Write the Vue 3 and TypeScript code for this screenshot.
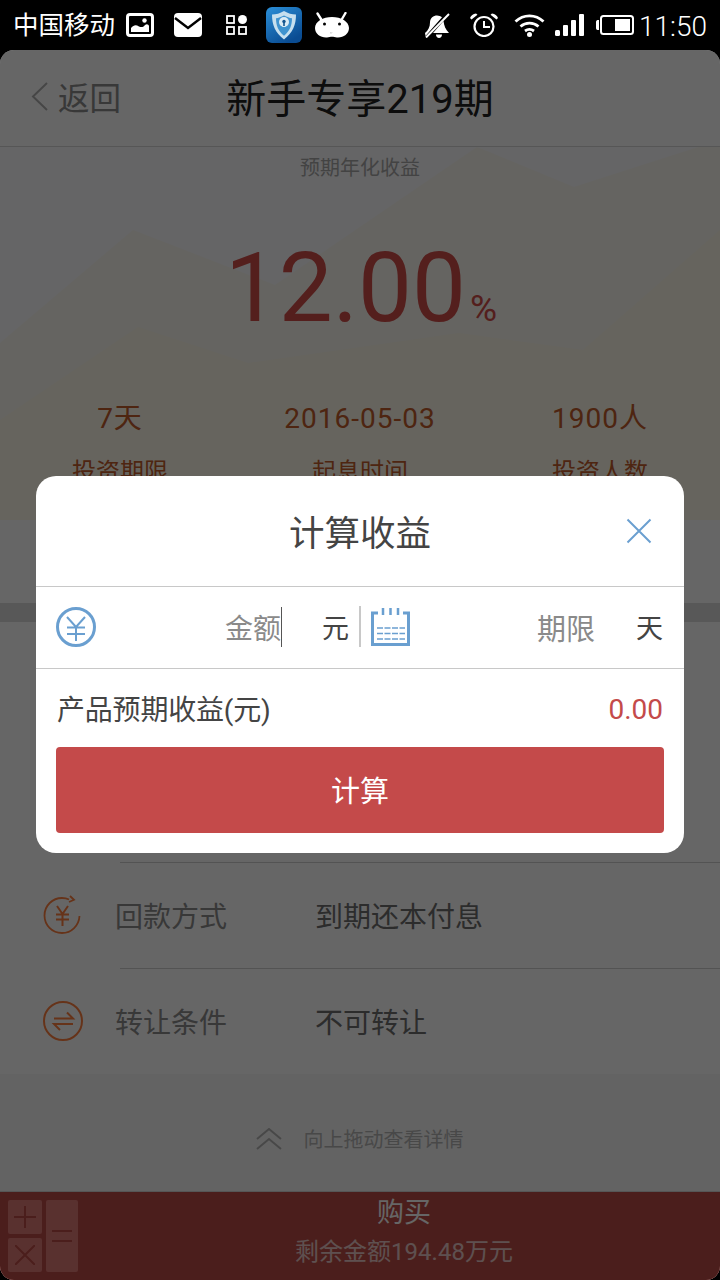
<script setup lang="ts">
const stats = [
  { value: "7天", label: "投资期限" },
  { value: "2016-05-03", label: "起息时间" },
  { value: "1900人", label: "投资人数" },
];
</script>

<template>
  <div class="screen">
    <div class="status">
      <div class="status-group">
        <span class="carrier">中国移动</span>
        <svg class="st-image" width="28" height="24" viewBox="0 0 28 24">
          <rect x="1.500" y="1.500" width="25" height="21" rx="2.500" fill="none" stroke="#fff" stroke-width="3" />
          <path d="M5 19v-4c3-3.500 5-3.500 8-1.500 3 1.500 5 0 6-1.500 2-1.500 3.500-.5 4 1v6z" fill="#fff" />
          <circle cx="18.500" cy="7.500" r="2.200" fill="#fff" />
        </svg>
        <svg class="st-mail" width="28" height="24" viewBox="0 0 28 24">
          <rect width="28" height="24" rx="4" fill="#fff" />
          <path d="M1 5l13 10L27 5" fill="none" stroke="#000" stroke-width="2.400" />
        </svg>
        <svg class="st-grid" width="21" height="20" viewBox="0 0 21 20">
          <g fill="none" stroke="#fff" stroke-width="1.800">
            <rect x="1" y="1" width="7" height="7" />
            <rect x="1" y="12" width="7" height="7" />
            <rect x="13" y="12" width="7" height="7" />
          </g>
          <circle cx="16.500" cy="4.500" r="4.500" fill="#fff" />
        </svg>
        <svg class="st-app" width="36" height="36" viewBox="0 0 36 36">
          <defs>
            <linearGradient id="appBg" x1="0" y1="0" x2="0.6" y2="1">
              <stop offset="0" stop-color="#2b8fd8" />
              <stop offset="1" stop-color="#0a4c92" />
            </linearGradient>
          </defs>
          <rect width="36" height="36" rx="6" fill="url(#appBg)" />
          <path d="M18 4c4 2.500 8 3.500 12 3.500 0 10-3 18-12 25C9 25.500 6 17.500 6 7.500 10 7.500 14 6.500 18 4z" fill="#c6dfee" />
          <path d="M18 8.500c3 1.700 5.500 2.400 8 2.700 0 7-2.200 13-8 17.500-5.800-4.500-8-10.500-8-17.500 2.500-.3 5-1 8-2.700z" fill="#3f93cf" />
          <circle cx="18" cy="15" r="5" fill="#dcecf5" />
          <path d="M16.800 14h2.400l.4 6h-3.200z" fill="#dcecf5" />
          <circle cx="18" cy="14.500" r="1.700" fill="#15568f" />
          <rect x="17.200" y="15" width="1.600" height="4" fill="#15568f" />
        </svg>
        <svg class="st-droid" width="34" height="26" viewBox="0 0 34 26">
          <path d="M6 7L2.500 1.500M27 7l3.500-6" stroke="#fff" stroke-width="2.400" stroke-linecap="round" />
          <path d="M17 5C8 5 0 9.500 0 16c0 6 6 10 12 9.500 2-.2 3.500-.8 5-.8s3 .6 5 .8c6 .5 12-3.500 12-9.500C34 9.500 26 5 17 5z" fill="#fff" />
          <circle cx="9.500" cy="12" r="1.500" fill="#000" />
          <circle cx="24.500" cy="12" r="1.500" fill="#000" />
          <path d="M15 20.500c1 .8 1.500.8 2 0" fill="none" stroke="#bbb" stroke-width="1" />
        </svg>
      </div>
      <div class="status-group">
        <svg class="st-bell" width="26" height="25" viewBox="0 0 26 25">
          <path d="M1 20c3-2.500 5-6 5-10.500C6 5 9.500 2.500 13 2.500c2 0 3.500.7 5 1.800L1.500 23z" fill="#fff" />
          <path d="M19.500 8c.5 4.500 2 8.500 5.500 12H9z" fill="#fff" />
          <path d="M12 21.500h6c0 2-1.300 3.500-3 3.500s-3-1.500-3-3.500z" fill="#fff" />
          <path d="M2 24.500L25 1" stroke="#fff" stroke-width="2" />
        </svg>
        <svg class="st-alarm" width="30" height="24" viewBox="0 0 30 24">
          <circle cx="15" cy="13.500" r="9.500" fill="none" stroke="#fff" stroke-width="2.200" />
          <path d="M15 8v6h6" fill="none" stroke="#fff" stroke-width="2" />
          <path d="M1 5c1-2.500 3-4 6-4.500l1.500 1.200L2.500 6.500zM29 5c-1-2.500-3-4-6-4.500l-1.500 1.200 6 4.800z" fill="#fff" />
        </svg>
        <svg class="st-wifi" width="31" height="24" viewBox="0 0 31 24">
          <g fill="none" stroke="#fff" stroke-width="2.800">
            <path d="M1.500 8.500c8-7.500 20-7.500 28 0" />
            <path d="M6.500 13.500c5.200-4.500 12.800-4.500 18 0" />
            <path d="M11 18c2.800-2 6.200-2 9 0" />
          </g>
          <circle cx="15.500" cy="21.500" r="2.500" fill="#fff" />
        </svg>
        <svg class="st-signal" width="29" height="22" viewBox="0 0 29 22">
          <g fill="#fff">
            <rect x="0" y="16" width="5" height="6" rx="1.500" />
            <rect x="8" y="11" width="5" height="11" rx="1" />
            <rect x="16" y="6" width="5" height="16" rx="1" />
            <rect x="24" y="0" width="5" height="22" rx="1" />
          </g>
        </svg>
        <svg class="st-battery" width="38" height="20" viewBox="0 0 38 20">
          <path d="M3 5H1.500C.7 5 0 6 0 7v6c0 1 .7 2 1.500 2H3z" fill="#fff" />
          <rect x="5" y="1" width="32" height="18" rx="2.500" fill="none" stroke="#fff" stroke-width="2" />
          <rect x="19" y="4" width="15" height="12" fill="#fff" />
        </svg>
        <span class="clock">11:50</span>
      </div>
    </div>

    <div class="page">
      <header class="nav">
        <div class="back">
          <svg width="17" height="29" viewBox="0 0 17 29">
            <path d="M16 1L2 14.500 16 28" fill="none" stroke="#b0b0b0" stroke-width="2" />
          </svg>
          <span>返回</span>
        </div>
        <h1>新手专享219期</h1>
      </header>

      <section class="hero">
        <svg class="hero-bg" width="720" height="373" viewBox="0 0 720 373">
          <path d="M275 138L477 0l97 40 146-47v380H0V196L133 83z" fill="#fdfbf3" />
          <path d="M0 273l138-93 110 36 211-30 124 17 137-120v290H0z" fill="#fefaea" />
        </svg>
        <p class="hero-label">预期年化收益</p>
        <div class="rate">12.00<span>%</span></div>
        <div class="stats">
          <div v-for="item in stats" :key="item.label" class="stat">
            <strong>{{ item.value }}</strong>
            <span>{{ item.label }}</span>
          </div>
        </div>
      </section>

      <div class="hero-gap"></div>
      <div class="band"></div>
      <div class="hidden-rows"></div>

      <div class="row">
        <span class="row-icon">
          <svg width="40" height="40" viewBox="0 0 40 40">
            <g fill="none" stroke="#ff8040" stroke-width="1.800">
              <path d="M36.500 21c-.5 9.500-8 17-17.500 17C9 38 1.500 30 1.500 20.500 1.500 10.500 9.500 3 19 3c3 0 5 .5 7 1.500" />
              <path d="M27 1l4 3.800-5 2.200" />
              <path d="M14 11l5.500 8 5.500-8M13 19.500h13M13 24.500h13M19.500 19v12" stroke-width="2" />
            </g>
          </svg>
        </span>
        <span class="row-label">回款方式</span>
        <span class="row-value">到期还本付息</span>
      </div>
      <div class="row">
        <span class="row-icon">
          <svg width="40" height="40" viewBox="0 0 40 40">
            <g fill="none" stroke="#ff8040" stroke-width="2">
              <circle cx="20" cy="20" r="19" />
              <path d="M11 17.500h19l-6-6M30 23H11l6 6" />
            </g>
          </svg>
        </span>
        <span class="row-label">转让条件</span>
        <span class="row-value">不可转让</span>
      </div>

      <footer class="drag-hint">
        <svg width="26" height="22" viewBox="0 0 26 22">
          <path d="M1 11L13 1l12 10M1 21l12-10 12 10" fill="none" stroke="#b4b4b4" stroke-width="2" />
        </svg>
        <span>向上拖动查看详情</span>
      </footer>

      <div class="buy-bar">
        <div class="calc">
          <div class="tile tile-plus">
            <svg width="22" height="22" viewBox="0 0 22 22"><path d="M0 11h22M11 0v22" /></svg>
          </div>
          <div class="tile tile-equals">
            <svg width="20" height="12" viewBox="0 0 20 12"><path d="M0 1h20M0 11h20" /></svg>
          </div>
          <div class="tile tile-times">
            <svg width="20" height="20" viewBox="0 0 20 20"><path d="M0 0l20 20M20 0L0 20" /></svg>
          </div>
        </div>
        <div class="buy-text">
          <strong>购买</strong>
          <span>剩余金额194.48万元</span>
        </div>
      </div>

      <div class="scrim"></div>

      <div class="dialog">
        <div class="dialog-head">
          <h2>计算收益</h2>
          <svg class="close" width="26" height="26" viewBox="0 0 26 26">
            <path d="M1.500 1.500l23 23M24.500 1.500l-23 23" fill="none" stroke="#6a9fd0" stroke-width="2" />
          </svg>
        </div>
        <div class="inputs">
          <div class="field field-amount">
            <svg width="40" height="40" viewBox="0 0 40 40">
              <g fill="none" stroke="#6a9fd0">
                <circle cx="20" cy="20" r="18.500" stroke-width="3" />
                <path d="M11 10l9 10 9-10M11 20.500h18M11 27h18M20 20v14" stroke-width="2" />
              </g>
            </svg>
            <span class="placeholder caret">金额</span>
            <span class="unit">元</span>
          </div>
          <div class="field field-term">
            <svg width="39" height="38" viewBox="0 0 39 38">
              <g fill="none" stroke="#6a9fd0">
                <path d="M7 5H1.500v31.500h36V5H32" stroke-width="3" />
                <path d="M12 0v7M19.500 0v7M27 0v7" stroke-width="2.500" />
                <path d="M6 20h28M6 25.500h28M6 31h28" stroke-width="1.600" stroke-dasharray="6 1.500" />
              </g>
            </svg>
            <span class="placeholder term-placeholder">期限</span>
            <span class="unit">天</span>
          </div>
        </div>
        <div class="result">
          <span class="result-label">产品预期收益(元)</span>
          <span class="amount">0.00</span>
        </div>
        <button class="calc-btn" type="button">计算</button>
      </div>
    </div>
  </div>
</template>

<style>
html,
body {
  margin: 0;
  background: #000;
}
</style>

<style scoped>
.screen {
  width: 720px;
  height: 1280px;
  overflow: hidden;
  background: #000;
  font-family: Roboto, "Noto Sans CJK SC", sans-serif;
}

.status {
  height: 50px;
  padding: 0 13px;
  box-sizing: border-box;
  display: flex;
  align-items: center;
  justify-content: space-between;
  color: #fff;
}

.status-group {
  display: flex;
  align-items: center;
}

.carrier {
  font-size: 25.500px;
  line-height: 50px;
}

.clock {
  margin-left: 5px;
  padding-top: 3px;
  font-size: 28px;
  font-weight: 300;
  line-height: 47px;
}

.st-image { margin-left: 11px; }
.st-mail { margin-left: 20px; }
.st-grid { margin-left: 24px; }
.st-app { margin-left: 19px; }
.st-droid { margin-left: 13px; }
.st-alarm { margin-left: 19px; }
.st-wifi { margin-left: 15px; }
.st-signal { margin-left: 10px; }
.st-battery { margin-left: 12px; }

.page {
  position: relative;
  height: 1230px;
  border-radius: 14px;
  overflow: hidden;
  background: #fff;
}

.nav {
  position: relative;
  height: 97px;
  box-sizing: border-box;
  padding-bottom: 4px;
  border-bottom: 1px solid #d8d8d8;
  display: flex;
  align-items: center;
  justify-content: center;
}

.back {
  position: absolute;
  left: 31px;
  top: 0;
  bottom: 4px;
  display: flex;
  align-items: center;
  gap: 10px;
  font-size: 31.500px;
  color: #8c8c8c;
}

.nav h1 {
  margin: 0;
  font-size: 40px;
  font-weight: 400;
  color: #222;
}

.hero {
  position: relative;
  height: 373px;
  text-align: center;
  overflow: hidden;
  background: #fcfcfe;
}

.hero-bg {
  position: absolute;
  left: 0;
  top: 0;
}

.hero-label {
  position: relative;
  margin: 0;
  font-size: 20px;
  line-height: 42px;
  color: #a8a8a8;
}

.rate {
  position: relative;
  height: 100px;
  margin-top: 49px;
  padding-left: 2px;
  font-size: 96px;
  line-height: 100px;
  color: #d24e4a;
}

.rate span {
  margin-left: 4px;
  font-size: 37px;
  line-height: 1;
}

.stats {
  position: relative;
  margin-top: 61px;
  display: grid;
  grid-template-columns: repeat(3, 1fr);
}

.stat {
  display: flex;
  flex-direction: column;
  align-items: center;
  color: #c25c2c;
}

.stat strong {
  font-size: 28px;
  font-weight: 400;
  letter-spacing: 1px;
  line-height: 40px;
}

.stat span {
  margin-top: 17px;
  font-size: 24px;
  line-height: 32px;
}

.hero-gap {
  height: 83px;
}

.band {
  height: 19px;
  background: #dcdcdc;
}

.hidden-rows {
  height: 240px;
}

.row {
  position: relative;
  height: 106px;
  padding-bottom: 1px;
  box-sizing: border-box;
  display: flex;
  align-items: center;
  font-size: 28px;
}

.row::before {
  content: "";
  position: absolute;
  left: 120px;
  right: 0;
  top: 0;
  height: 1px;
  background: #d0d0d0;
}

.row-icon {
  width: 115px;
  padding-left: 43px;
  box-sizing: border-box;
  display: flex;
}

.row-label {
  width: 200px;
  color: #8c8c8c;
}

.row-value {
  color: #6e6e6e;
}

.drag-hint {
  height: 117px;
  background: #f8f8f8;
  display: flex;
  align-items: center;
  justify-content: center;
  gap: 22px;
  padding: 12px 1px 0 0;
  box-sizing: border-box;
  font-size: 20px;
  color: #b4b4b4;
}

.buy-bar {
  height: 89px;
  box-sizing: border-box;
  border-top: 1px solid #d8d8d8;
  background: #bc4c46;
  display: flex;
}

.calc {
  width: 88px;
  box-sizing: border-box;
  padding: 8px 10px 8px 8px;
  display: grid;
  grid-template-columns: 34px 32px;
  grid-template-rows: 34px 34px;
  gap: 4px;
}

.tile {
  display: flex;
  align-items: center;
  justify-content: center;
  border-radius: 2px;
  background: #df7a76;
}

.tile svg {
  fill: none;
  stroke: #bc4c46;
  stroke-width: 2;
}

.tile-equals {
  grid-row: 1 / 3;
  grid-column: 2;
}

.tile-times {
  grid-row: 2;
  grid-column: 1;
}

.buy-text {
  flex: 1;
  display: flex;
  flex-direction: column;
  align-items: center;
  color: #fff;
}

.buy-text strong {
  padding-top: 1px;
  font-size: 27px;
  font-weight: 400;
  line-height: 41px;
}

.buy-text span {
  font-size: 24px;
  line-height: 36px;
  opacity: 0.7;
}

.scrim {
  position: absolute;
  inset: 0;
  background: rgba(0, 0, 0, 0.6);
}

.dialog {
  position: absolute;
  left: 36px;
  top: 426px;
  width: 648px;
  height: 377px;
  border-radius: 20px;
  background: #fff;
  overflow: hidden;
}

.dialog-head {
  position: relative;
  height: 111px;
  box-sizing: border-box;
  padding-bottom: 2px;
  border-bottom: 1px solid #c8c8c8;
  display: flex;
  align-items: center;
  justify-content: center;
}

.dialog-head h2 {
  margin: 0;
  font-size: 35.500px;
  font-weight: 400;
  color: #444;
}

.close {
  position: absolute;
  right: 32px;
  top: 42px;
}

.inputs {
  height: 82px;
  box-sizing: border-box;
  padding: 0 21px 2px 20px;
  border-bottom: 1px solid #c8c8c8;
  display: flex;
  align-items: center;
}

.field {
  display: flex;
  align-items: center;
}

.field-amount {
  width: 305px;
  height: 41px;
  box-sizing: border-box;
  padding-right: 10px;
  border-right: 2px solid #c8c8c8;
  margin-right: 10px;
}

.field-term {
  flex: 1;
}

.placeholder {
  margin-left: auto;
  font-size: 28px;
  color: #8a8a8a;
}

.caret {
  position: relative;
}

.caret::after {
  content: "";
  position: absolute;
  right: -1px;
  top: 0;
  bottom: 0;
  width: 1.500px;
  background: #555;
}

.term-placeholder {
  font-size: 29px;
}

.unit {
  margin-left: 41px;
  font-size: 27px;
  color: #444;
}

.result {
  height: 78px;
  padding: 0 21px;
  display: flex;
  align-items: center;
  justify-content: space-between;
  font-size: 28px;
  color: #444;
}

.result-label {
  letter-spacing: -0.2px;
}

.amount {
  padding-top: 2px;
  color: #c44a4a;
}

.calc-btn {
  display: block;
  width: 608px;
  height: 86px;
  margin: 0 20px;
  padding: 0 0 2px;
  border: 0;
  border-radius: 4px;
  background: #c44a4a;
  color: #fff;
  font: inherit;
  font-size: 29px;
}
</style>
